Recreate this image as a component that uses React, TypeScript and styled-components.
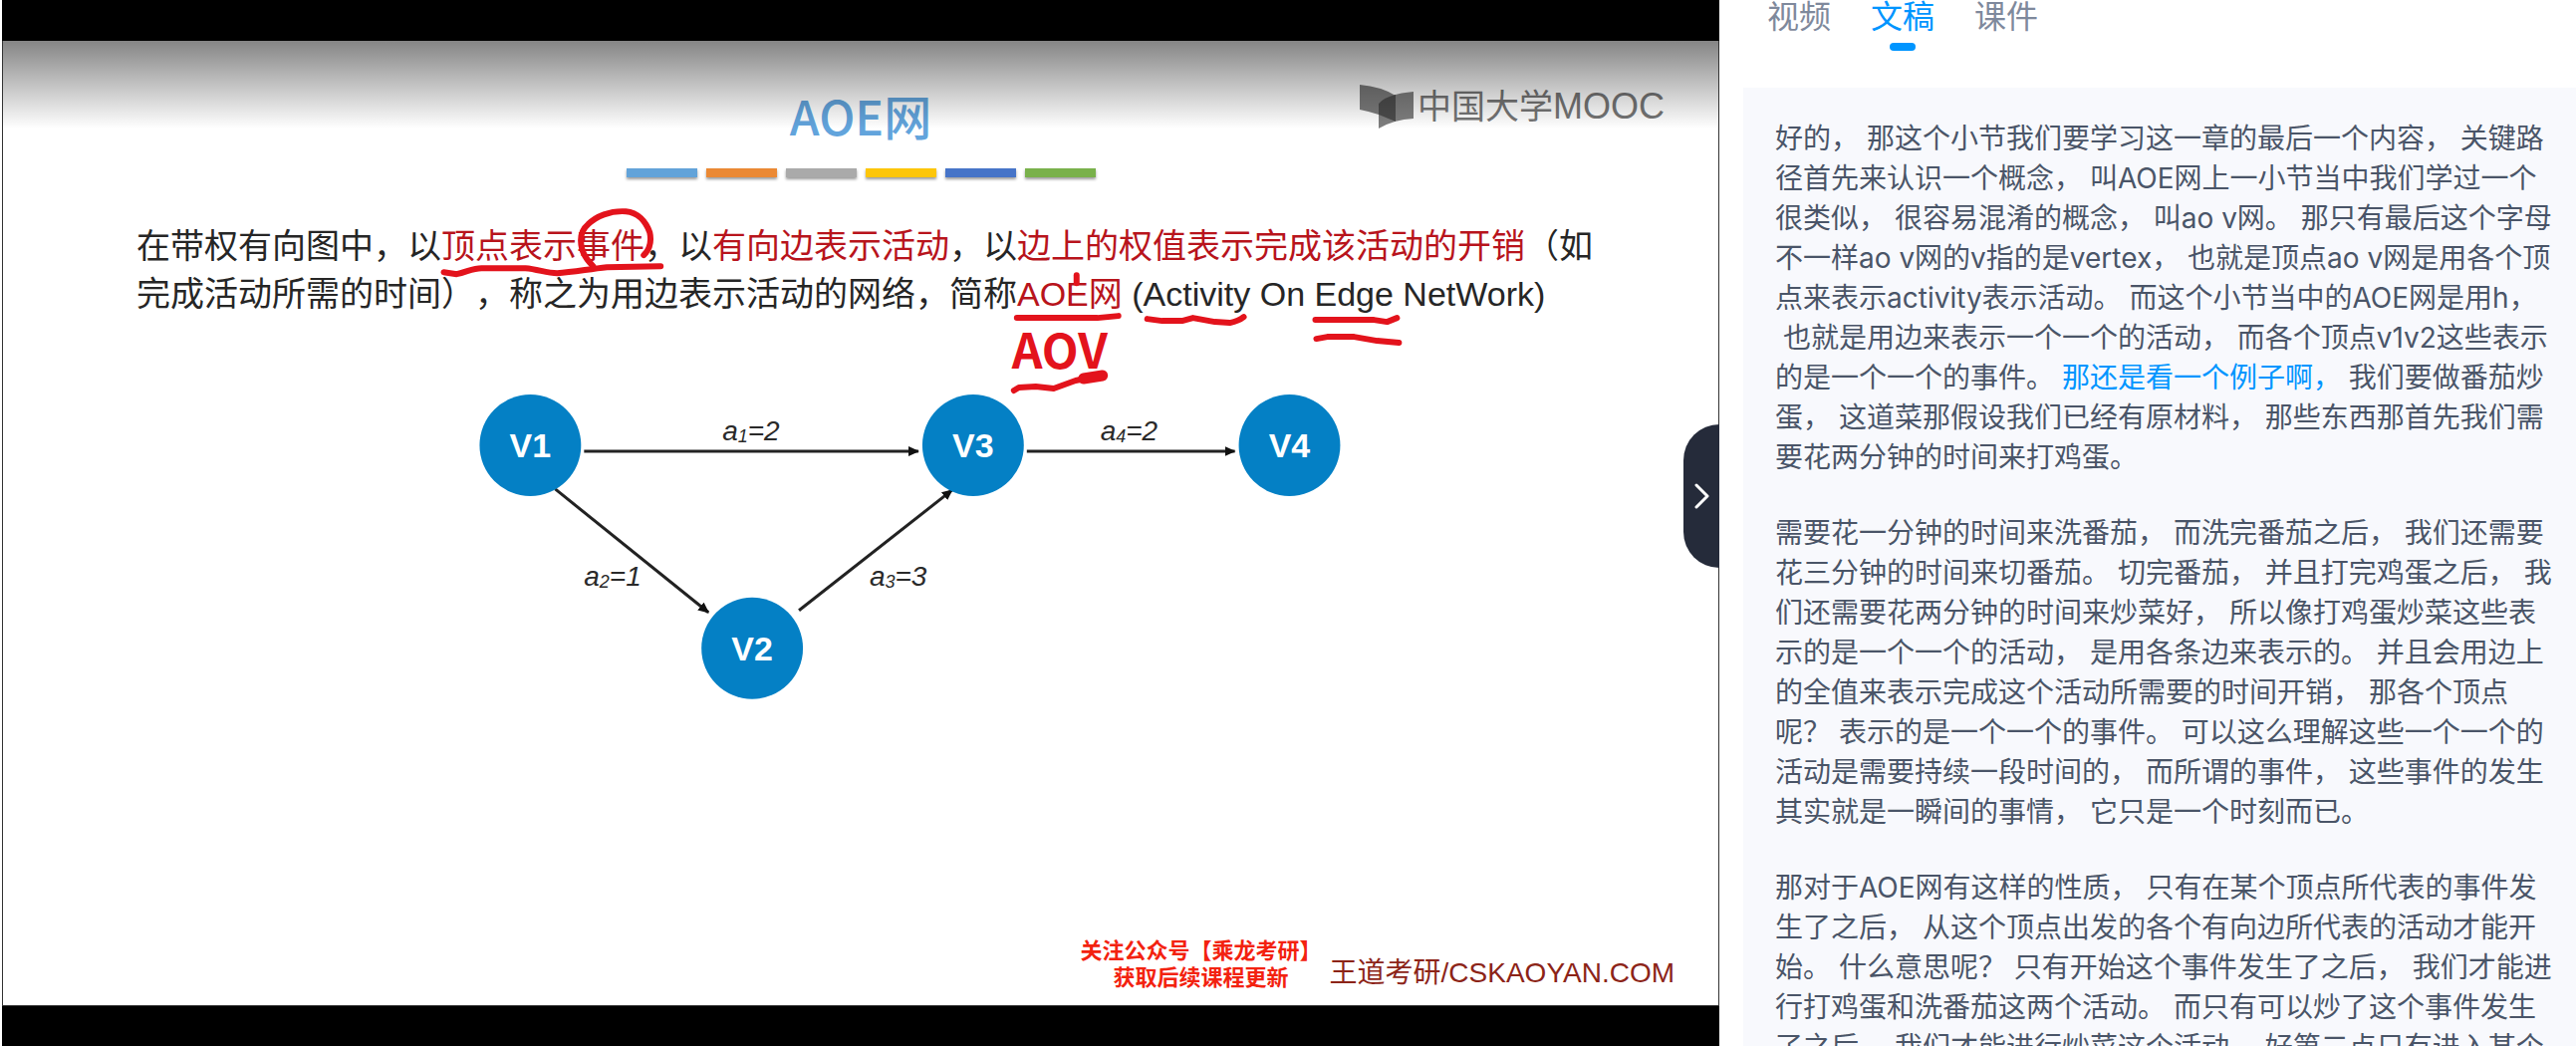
import React from "react";
import styled, { createGlobalStyle } from "styled-components";

const Global = createGlobalStyle`
  *, *::before, *::after { box-sizing: border-box; }
  body {
    margin: 0;
    background: #fff;
    font-family: Inter, "Noto Sans CJK SC", sans-serif;
    text-spacing-trim: space-all;
  }
`;

const Page = styled.div`
  display: flex;
  height: 100vh;
  overflow: hidden;
`;

const Stage = styled.main`
  position: relative;
  flex: 1;
  min-width: 0;
  display: flex;
  flex-direction: column;
  justify-content: center;
  margin-left: 2px;
  padding-top: 1px;
  background: #000;
`;

const Slide = styled.section`
  position: relative;
  display: flex;
  flex-direction: column;
  aspect-ratio: 16 / 9;
  background: #fff;
  border: solid #333;
  border-width: 0 1px 1px;
  font-family: "Liberation Sans", "Noto Sans CJK SC", sans-serif;
  &::after {
    content: "";
    position: absolute;
    inset: 0 0 auto;
    height: 88px;
    background: linear-gradient(rgba(0, 0, 0, 0.48), rgba(0, 0, 0, 0));
  }
`;

const Title = styled.h1`
  margin: 40px 0 0;
  text-align: center;
  font: 500 48px/68px "Noto Sans CJK SC", sans-serif;
  color: #62a4dc;
`;

const Bars = styled.div`
  display: flex;
  justify-content: center;
  gap: 9px;
  margin-top: 20px;
`;

const Bar = styled.span<{ $color: string }>`
  width: 71px;
  height: 9px;
  background: ${(p) => p.$color};
  box-shadow: 0 2px 3px rgba(0, 0, 0, 0.4);
`;

const Definition = styled.p`
  margin: 45px 112px 0 134px;
  font-size: 34px;
  line-height: 48px;
  color: #262626;
`;

const Red = styled.em`
  font-style: normal;
  color: #b8141c;
`;

const Overlay = styled.svg`
  position: absolute;
  inset: 0;
  width: 100%;
  height: 100%;
`;

const NodeName = styled.text`
  font-size: 34px;
  font-weight: 700;
  fill: #fff;
  text-anchor: middle;
`;

const EdgeName = styled.text`
  font-size: 28px;
  font-style: italic;
  fill: #2a2a2a;
`;

const InkText = styled.text`
  font: 700 48px "Noto Sans CJK SC", sans-serif;
  fill: #e3131c;
  text-anchor: middle;
`;

const Watermark = styled.div`
  position: absolute;
  top: 42px;
  right: 54px;
  display: flex;
  align-items: center;
  gap: 4px;
  color: #757575;
  font-size: 34px;
  line-height: 48px;
`;

const Mooc = styled.span`
  font-size: 36px;
`;

const Footer = styled.footer`
  display: flex;
  align-items: flex-end;
  justify-content: flex-end;
  gap: 8px;
  margin: auto 44px 14px 0;
`;

const Notice = styled.p`
  margin: 0;
  text-align: center;
  font-size: 22px;
  font-weight: 700;
  line-height: 27px;
  color: #f3220f;
`;

const Brand = styled.p`
  margin: 0;
  font-size: 28px;
  line-height: 36px;
  color: #8c2418;
`;

const Collapse = styled.button`
  position: absolute;
  right: 0;
  top: 426px;
  width: 36px;
  height: 144px;
  padding: 0;
  border: 0;
  border-radius: 36px 0 0 36px;
  display: grid;
  place-items: center;
  background: #252b3a;
  cursor: pointer;
`;

const Side = styled.aside`
  flex: none;
  width: 860px;
  display: flex;
  flex-direction: column;
  padding-left: 24px;
`;

const Tabs = styled.nav`
  display: flex;
  gap: 40px;
  height: 88px;
  padding-left: 24px;
`;

const Tab = styled.button<{ $active?: boolean }>`
  display: flex;
  flex-direction: column;
  align-items: center;
  gap: 10px;
  padding: 0;
  border: 0;
  background: none;
  font: inherit;
  font-size: 32px;
  line-height: 33px;
  color: ${(p) => (p.$active ? "#0095ff" : "#7f899c")};
  cursor: pointer;
  &::after {
    content: "";
    width: 26px;
    height: 8px;
    border-radius: 4px;
    background: ${(p) => (p.$active ? "#0095ff" : "transparent")};
  }
`;

const Transcript = styled.article`
  flex: 1;
  min-height: 0;
  overflow: hidden;
  padding: 31px 20px 0 32px;
  background: #f8f9fd;
`;

const Paragraph = styled.p`
  margin: 0 0 36px;
  font-size: 28px;
  line-height: 40px;
  color: #4a5568;
`;

const Current = styled.mark`
  background: none;
  color: #0095ff;
`;

const barColors = ["#62a3d9", "#eb8934", "#aaaaaa", "#fdc60a", "#4674c8", "#79b14b"];

const nodes = [
  { name: "V1", x: 532, y: 447 },
  { name: "V2", x: 755, y: 651 },
  { name: "V3", x: 977, y: 447 },
  { name: "V4", x: 1295, y: 447 },
];

const edges = [
  { index: 1, cost: 2, from: [586, 453], to: [922, 453], label: [725, 442] },
  { index: 2, cost: 1, from: [557, 491], to: [711, 615], label: [586, 588] },
  { index: 3, cost: 3, from: [802, 613], to: [956, 492], label: [873, 588] },
  { index: 4, cost: 2, from: [1031, 453], to: [1240, 453], label: [1105, 442] },
];

const inkStrokes = [
  "M595 267C590 262 586 257 584 250C581 238 584 230 590 225C598 217 612 211 628 212C640 213 648 222 652 233C654 242 652 250 646 256",
  "M445 273L458 275C468 273 474 269 483 269L527 269C540 270 548 274 559 274C575 273 590 270 609 268L663 267",
  "M1021 319L1102 319L1123 317",
  "M1081 276L1081 284",
  "M1152 320L1167 322L1187 322L1198 319L1220 323L1235 324Q1244 322 1249 318",
  "M1321 321L1380 321L1393 323L1403 319",
  "M1322 340L1333 338L1360 338L1383 342L1405 344",
  "M1018 392L1023 389L1040 388L1058 390L1080 382L1090 380",
];

function Diagram() {
  return (
    <Overlay viewBox="2 41 1724 969" role="img" aria-label="AOE网示例">
      <defs>
        <marker id="arrow" markerWidth="12" markerHeight="12" refX="10" refY="6" orient="auto" markerUnits="userSpaceOnUse">
          <path d="M0 1L11 6L0 11Z" fill="#111" />
        </marker>
      </defs>
      {edges.map((e) => (
        <g key={e.index}>
          <line x1={e.from[0]} y1={e.from[1]} x2={e.to[0]} y2={e.to[1]} stroke="#222" strokeWidth="3" markerEnd="url(#arrow)" />
          <EdgeName x={e.label[0]} y={e.label[1]}>
            a<tspan fontSize="18" dy="2">{e.index}</tspan>
            <tspan dy="-2">={e.cost}</tspan>
          </EdgeName>
        </g>
      ))}
      {nodes.map((n) => (
        <g key={n.name}>
          <circle cx={n.x} cy={n.y} r="51" fill="#0480c5" />
          <NodeName x={n.x} y={n.y + 12}>{n.name}</NodeName>
        </g>
      ))}
      <g fill="none" stroke="#e3131c" strokeWidth="6" strokeLinecap="round" strokeLinejoin="round">
        {inkStrokes.map((d) => (
          <path key={d} d={d} />
        ))}
        <path d="M1088 380L1107 377" strokeWidth="11" />
      </g>
      <InkText x="1064" y="370">AOV</InkText>
    </Overlay>
  );
}

export default function App() {
  return (
    <Page>
      <Global />
      <Stage>
        <Slide>
          <Title>AOE网</Title>
          <Bars>
            {barColors.map((c) => (
              <Bar key={c} $color={c} />
            ))}
          </Bars>
          <Definition>
            在带权有向图中，以<Red>顶点表示事件</Red>，以<Red>有向边表示活动</Red>，以<Red>边上的权值表示完成该活动的开销</Red>（如完成活动所需的时间），称之为用边表示活动的网络，简称<Red>AOE网</Red> (Activity On Edge NetWork)
          </Definition>
          <Diagram />
          <Watermark>
            <svg width="54" height="44" viewBox="0 0 54 44" aria-hidden="true">
              <path d="M0 0Q22 2 36 11V37Q20 29 0 25Z" fill="#7b7b7b" />
              <path d="M19 19Q28 9 54 7V34Q34 35 19 44Z" fill="#7f7f7f" />
              <path d="M19 19Q24 13 36 10V37L19 30Z" fill="#4c4c4c" />
            </svg>
            <span>中国大学<Mooc>MOOC</Mooc></span>
          </Watermark>
          <Footer>
            <Notice>
              关注公众号【乘龙考研】
              <br />
              获取后续课程更新
            </Notice>
            <Brand>王道考研/CSKAOYAN.COM</Brand>
          </Footer>
        </Slide>
        <Collapse aria-label="收起侧栏">
          <svg width="16" height="26" viewBox="0 0 16 26" fill="none" stroke="#fff" strokeWidth="3" strokeLinecap="round" strokeLinejoin="round">
            <path d="M3 2L14 13L3 24" />
          </svg>
        </Collapse>
      </Stage>
      <Side>
        <Tabs>
          <Tab>视频</Tab>
          <Tab $active>文稿</Tab>
          <Tab>课件</Tab>
        </Tabs>
        <Transcript>
          <Paragraph>
            好的， 那这个小节我们要学习这一章的最后一个内容， 关键路径首先来认识一个概念， 叫AOE网上一小节当中我们学过一个很类似， 很容易混淆的概念， 叫ao v网。 那只有最后这个字母不一样ao v网的v指的是vertex， 也就是顶点ao v网是用各个顶点来表示activity表示活动。 而这个小节当中的AOE网是用h，<wbr />&nbsp;也就是用边来表示一个一个的活动， 而各个顶点v1v2这些表示的是一个一个的事件。 <Current>那还是看一个例子啊，</Current> 我们要做番茄炒蛋， 这道菜那假设我们已经有原材料， 那些东西那首先我们需要花两分钟的时间来打鸡蛋。
          </Paragraph>
          <Paragraph>
            需要花一分钟的时间来洗番茄， 而洗完番茄之后， 我们还需要花三分钟的时间来切番茄。 切完番茄， 并且打完鸡蛋之后， 我们还需要花两分钟的时间来炒菜好， 所以像打鸡蛋炒菜这些表示的是一个一个的活动， 是用各条边来表示的。 并且会用边上的全值来表示完成这个活动所需要的时间开销， 那各个顶点呢？ 表示的是一个一个的事件。 可以这么理解这些一个一个的活动是需要持续一段时间的， 而所谓的事件， 这些事件的发生其实就是一瞬间的事情， 它只是一个时刻而已。
          </Paragraph>
          <Paragraph>
            那对于AOE网有这样的性质， 只有在某个顶点所代表的事件发生了之后， 从这个顶点出发的各个有向边所代表的活动才能开始。 什么意思呢？ 只有开始这个事件发生了之后， 我们才能进行打鸡蛋和洗番茄这两个活动。 而只有可以炒了这个事件发生了之后， 我们才能进行炒菜这个活动。 好第二点只有进入某个
          </Paragraph>
        </Transcript>
      </Side>
    </Page>
  );
}
